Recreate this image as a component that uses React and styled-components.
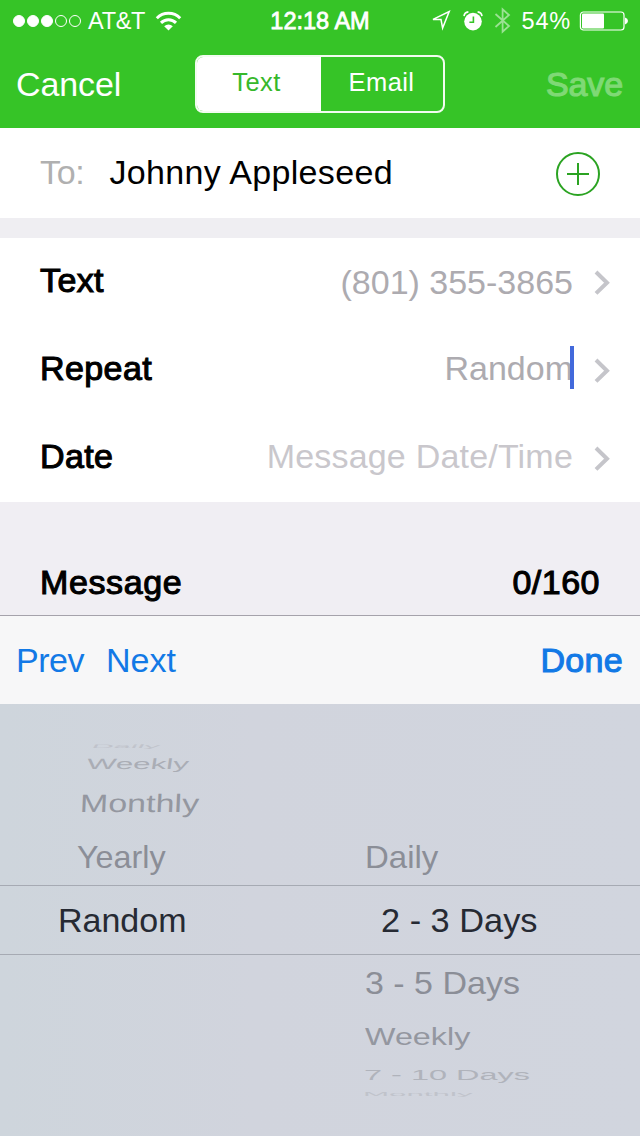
import styled, { createGlobalStyle } from "styled-components";

const GlobalStyle = createGlobalStyle`
  * {
    box-sizing: border-box;
  }

  body {
    margin: 0;
    background: #d1d5de;
    font-family: "Liberation Sans", Arial, sans-serif;
    font-size: 34px;
    line-height: 1;
  }
`;

const Screen = styled.div`
  width: 640px;
  height: 1136px;
  overflow: hidden;
  display: flex;
  flex-direction: column;
  white-space: nowrap;
`;

// medium weight: a regular face thickened by a hairline stroke
const Text = styled.span`
  color: ${(props) => props.color || "#000"};
  letter-spacing: ${(props) => props.$spacing || 0}px;
  -webkit-text-stroke: ${(props) => (props.$medium ? "1.1px" : "0")};
`;

const Header = styled.header`
  height: 128px;
  background: #36c427;
  color: #fff;
`;

const StatusBar = styled.div`
  height: 41px;
  padding: 0 12px 0 13px;
  display: grid;
  grid-template-columns: 1fr auto 1fr;
  align-items: center;
  font-size: 23.5px;
`;

const StatusGroup = styled.div`
  display: flex;
  align-items: center;
  justify-content: ${(props) => props.$align || "flex-start"};
`;

const Signal = styled.div`
  display: flex;
  gap: 2px;
  margin-right: 7px;
`;

const SignalDot = styled.span`
  width: 12px;
  height: 12px;
  border-radius: 50%;
  border: 1px solid #fff;
  background: ${(props) => (props.$filled ? "#fff" : "transparent")};
`;

const Carrier = styled.span`
  padding-top: 2px;
  letter-spacing: -0.3px;
`;

const Clock = styled.span`
  margin-left: -1px;
  padding-top: 2px;
  -webkit-text-stroke: 0.8px;
`;

const StatusIcon = styled.svg`
  display: block;
  flex: none;
  margin-left: ${(props) => props.$gap}px;
`;

const Percent = styled.span`
  margin: 0 8px 0 11px;
  padding-top: 2px;
  letter-spacing: 0.8px;
`;

const NavBar = styled.nav`
  height: 87px;
  padding: 0 17px 2px 16px;
  display: grid;
  grid-template-columns: 1fr 250px 1fr;
  align-items: center;
`;

const NavButton = styled.span`
  justify-self: ${(props) => props.$side};
  padding-top: 1px;
  letter-spacing: -0.1px;
  opacity: ${(props) => (props.$disabled ? 0.36 : 1)};
  -webkit-text-stroke: ${(props) => (props.$disabled ? "1.1px" : "0")};
`;

const Segmented = styled.div`
  height: 58px;
  display: grid;
  grid-template-columns: 124px 1fr;
  border: 2px solid #f2fcf0;
  border-radius: 8px;
  overflow: hidden;
  font-size: 25.5px;
`;

const Segment = styled.span`
  display: flex;
  align-items: center;
  justify-content: center;
  padding: 0 ${(props) => (props.$active ? 4 : 0)}px 2px 0;
  letter-spacing: 0.4px;
  color: ${(props) => (props.$active ? "#36b82b" : "#fff")};
  background: ${(props) => (props.$active ? "#fff" : "transparent")};
`;

const Recipient = styled.div`
  height: 90px;
  padding: 0 40px;
  display: flex;
  align-items: center;
  background: #fff;
`;

const RecipientPrefix = styled(Text)`
  padding-bottom: 2px;
`;

const RecipientName = styled(Text)`
  flex: 1;
  margin-left: 25px;
  padding-bottom: 2px;
`;

const AddIcon = styled.svg`
  display: block;
  margin-top: 2px;
`;

const Divider = styled.div`
  height: 20px;
  background: #efeef2;
`;

const Field = styled.div`
  height: 88px;
  padding: 0 30px 0 40px;
  display: flex;
  align-items: center;
  background: #fff;
`;

const FieldLabel = styled(Text)`
  flex: 1;
  padding-bottom: 4px;
`;

const FieldValue = styled.div`
  position: relative;
  margin-right: 21px;
  padding-bottom: ${(props) => props.$lift}px;
`;

const Caret = styled.span`
  position: absolute;
  right: -1px;
  top: -5px;
  width: 4px;
  height: 43px;
  background: #4269db;
`;

const MessageHeader = styled.div`
  height: 114px;
  padding: 47px 40px 0;
  display: flex;
  align-items: center;
  justify-content: space-between;
  background: #f0eef3;
  border-bottom: 1px solid #a5a2ab;
`;

const Toolbar = styled.div`
  height: 88px;
  padding: 0 17px 0 16px;
  display: flex;
  align-items: center;
  gap: 22px;
  background: #f7f7f8;
`;

const ToolbarEnd = styled.div`
  margin-left: auto;
`;

const Picker = styled.div`
  flex: 1;
  display: grid;
  grid-template-columns: 320px 320px;
  background: linear-gradient(90deg, #ced5dc, #d1d4dd 40%, #d1d5de);
`;

const Wheel = styled.div`
  padding-top: ${(props) => props.$top}px;
`;

const WheelRow = styled.div`
  height: ${(props) => props.$height}px;
  padding-left: ${(props) => props.$left}px;
  display: flex;
  align-items: center;
`;

const SelectedRow = styled(WheelRow)`
  border-top: 1px solid #a6aab3;
  border-bottom: 1px solid #a6aab3;
`;

// rows flatten as the wheel turns away from the viewer
const WheelText = styled.span`
  flex: none;
  color: ${(props) => props.color};
  transform-origin: 0 50%;
  transform: scale(${(props) => props.$x}, ${(props) => props.$y})
    skewX(${(props) => props.$skew || 0}deg);
`;

const fields = [
  { label: "Text", value: "(801) 355-3865", color: "#adabb0", lift: 0 },
  { label: "Repeat", value: "Random", color: "#adabb0", lift: 4, editing: true },
  { label: "Date", value: "Message Date/Time", color: "#c9c7cc", lift: 4, spacing: 0.2 },
];

const frequencies = [
  { text: "Daily", height: 11, left: 92, x: 0.9, y: 0.15, skew: -6, color: "#c0c3cb" },
  { text: "Weekly", height: 26, left: 87, x: 0.92, y: 0.44, skew: -4, color: "#aaadb5" },
  { text: "Monthly", height: 51, left: 80, x: 1, y: 0.74, skew: -2, color: "#9497a0" },
  { text: "Yearly", height: 57, left: 77, x: 0.95, y: 0.9, color: "#8b8e97" },
  { text: "Random", height: 70, left: 58, x: 1, y: 1, color: "#262a33", selected: true },
];

const intervals = [
  { text: "Daily", height: 57, left: 45, x: 0.97, y: 0.9, color: "#8b8e97" },
  { text: "2 - 3 Days", height: 70, left: 61, x: 1.01, y: 1, color: "#262a33", selected: true },
  { text: "3 - 5 Days", height: 55, left: 45, x: 1, y: 0.9, color: "#8b8e97" },
  { text: "Weekly", height: 51, left: 45, x: 0.95, y: 0.73, color: "#9497a0" },
  { text: "7 - 10 Days", height: 27, left: 44, x: 0.955, y: 0.45, color: "#b0b3bb" },
  { text: "Monthly", height: 11, left: 43, x: 0.92, y: 0.15, color: "#c0c3cb" },
];

function Wifi() {
  return (
    <StatusIcon $gap={10} width="27" height="20" viewBox="0 0 27 20" fill="none" stroke="#fff" strokeWidth="3">
      <path d="M1.8 7.2a16.5 16.5 0 0 1 23.4 0" />
      <path d="M6 11.9a10.6 10.6 0 0 1 15 0" />
      <path d="M9.2 15.3a6.2 6.2 0 0 1 8.6 0L13.5 19.4Z" fill="#fff" stroke="none" />
    </StatusIcon>
  );
}

function Location() {
  return (
    <StatusIcon $gap={0} width="21" height="21" viewBox="0 0 21 21" fill="none" stroke="#fff" strokeWidth="1.5">
      <path d="M3 9.4 19.2 1.6 12.6 18 11 9.6Z" strokeLinejoin="miter" />
    </StatusIcon>
  );
}

function Alarm() {
  return (
    <StatusIcon $gap={12} width="20" height="20" viewBox="0 0 20 20" fill="none">
      <path d="M1 5.2Q1.4 1.4 5.4.9M19 5.2Q18.6 1.4 14.6.9" stroke="#fff" strokeWidth="1.6" />
      <circle cx="10" cy="10.6" r="8.8" fill="#fff" />
      <path d="M10.4 5.4v5.8H6.4" stroke="#36c427" strokeWidth="1.6" />
    </StatusIcon>
  );
}

function Bluetooth() {
  return (
    <StatusIcon $gap={11} width="17" height="27" viewBox="0 0 17 27" fill="none" stroke="#fff" strokeOpacity=".5" strokeWidth="1.8">
      <path d="M1.5 7 15 19 8.6 24.7V2.3L15 8 1.5 20" />
    </StatusIcon>
  );
}

function Battery() {
  return (
    <StatusIcon $gap={0} width="49" height="20" viewBox="0 0 49 20" fill="none">
      <rect x="1.4" y="1" width="43.6" height="18" rx="3" stroke="#fff" strokeWidth="1.2" />
      <rect x="3" y="2.6" width="22" height="14.8" rx="1" fill="#fff" />
      <path d="M46 6.6q3 1 3 3.4t-3 3.4Z" fill="#fff" />
    </StatusIcon>
  );
}

function Chevron() {
  return (
    <svg width="16" height="26" viewBox="0 0 16 26" fill="none" stroke="#c5c5ca" strokeWidth="4">
      <path d="M2 3 13 13.7 2 24.4" />
    </svg>
  );
}

function WheelColumn({ items, top }) {
  return (
    <Wheel $top={top}>
      {items.map((item) => {
        const Row = item.selected ? SelectedRow : WheelRow;
        return (
          <Row key={item.text} $height={item.height} $left={item.left}>
            <WheelText color={item.color} $x={item.x} $y={item.y} $skew={item.skew}>
              {item.text}
            </WheelText>
          </Row>
        );
      })}
    </Wheel>
  );
}

export default function App() {
  return (
    <Screen>
      <GlobalStyle />
      <Header>
        <StatusBar>
          <StatusGroup>
            <Signal>
              {[1, 2, 3, 4, 5].map((dot) => (
                <SignalDot key={dot} $filled={dot <= 3} />
              ))}
            </Signal>
            <Carrier>AT&amp;T</Carrier>
            <Wifi />
          </StatusGroup>
          <Clock>12:18 AM</Clock>
          <StatusGroup $align="flex-end">
            <Location />
            <Alarm />
            <Bluetooth />
            <Percent>54%</Percent>
            <Battery />
          </StatusGroup>
        </StatusBar>
        <NavBar>
          <NavButton $side="start">Cancel</NavButton>
          <Segmented>
            <Segment $active>Text</Segment>
            <Segment>Email</Segment>
          </Segmented>
          <NavButton $side="end" $disabled>Save</NavButton>
        </NavBar>
      </Header>

      <Recipient>
        <RecipientPrefix color="#b0b0b0" $spacing={-0.3}>To:</RecipientPrefix>
        <RecipientName $spacing={0.35}>Johnny Appleseed</RecipientName>
        <AddIcon width="44" height="44" viewBox="0 0 44 44" fill="none" stroke="#2ba322" strokeWidth="2">
          <circle cx="22" cy="22" r="21" />
          <path d="M11 22h22M22 11v22" />
        </AddIcon>
      </Recipient>
      <Divider />

      {fields.map((field) => (
        <Field key={field.label}>
          <FieldLabel $medium $spacing={0.4}>{field.label}</FieldLabel>
          <FieldValue $lift={field.lift}>
            <Text color={field.color} $spacing={field.spacing}>{field.value}</Text>
            {field.editing && <Caret />}
          </FieldValue>
          <Chevron />
        </Field>
      ))}

      <MessageHeader>
        <Text $medium $spacing={0.6}>Message</Text>
        <Text $medium $spacing={0.5}>0/160</Text>
      </MessageHeader>

      <Toolbar>
        <Text color="#1279e6" $spacing={-0.5}>Prev</Text>
        <Text color="#1279e6">Next</Text>
        <ToolbarEnd>
          <Text color="#1279e6" $medium $spacing={0.3}>Done</Text>
        </ToolbarEnd>
      </Toolbar>

      <Picker>
        <WheelColumn items={frequencies} top={36} />
        <WheelColumn items={intervals} top={124} />
      </Picker>
    </Screen>
  );
}
